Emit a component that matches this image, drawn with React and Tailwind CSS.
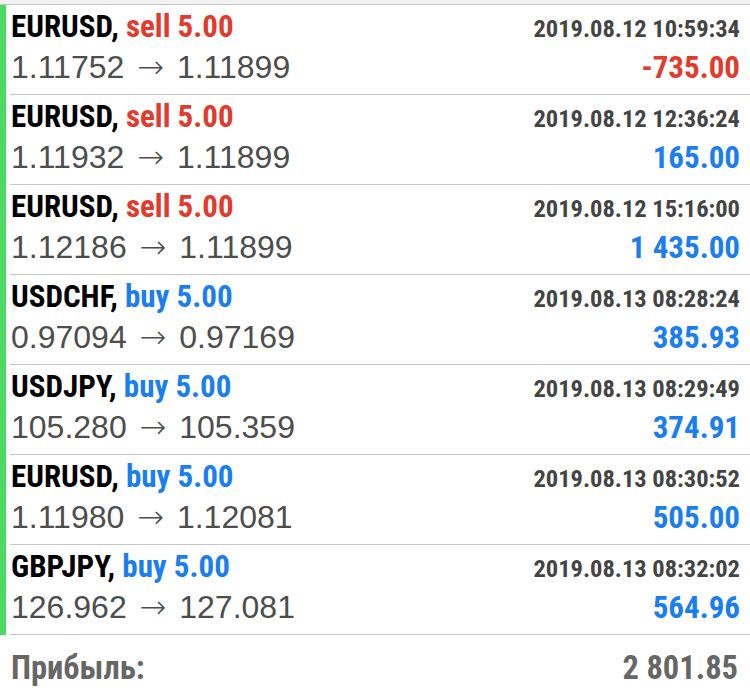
const trades = [
  { symbol: "EURUSD", side: "sell", lots: "5.00", open: "1.11752", close: "1.11899", time: "2019.08.12 10:59:34", profit: "-735.00" },
  { symbol: "EURUSD", side: "sell", lots: "5.00", open: "1.11932", close: "1.11899", time: "2019.08.12 12:36:24", profit: "165.00" },
  { symbol: "EURUSD", side: "sell", lots: "5.00", open: "1.12186", close: "1.11899", time: "2019.08.12 15:16:00", profit: "1 435.00" },
  { symbol: "USDCHF", side: "buy", lots: "5.00", open: "0.97094", close: "0.97169", time: "2019.08.13 08:28:24", profit: "385.93" },
  { symbol: "USDJPY", side: "buy", lots: "5.00", open: "105.280", close: "105.359", time: "2019.08.13 08:29:49", profit: "374.91" },
  { symbol: "EURUSD", side: "buy", lots: "5.00", open: "1.11980", close: "1.12081", time: "2019.08.13 08:30:52", profit: "505.00" },
  { symbol: "GBPJPY", side: "buy", lots: "5.00", open: "126.962", close: "127.081", time: "2019.08.13 08:32:02", profit: "564.96" },
];

const narrow = "font-['Roboto_Condensed','Liberation_Sans_Narrow','Liberation_Sans',sans-serif] font-bold";

function TradeRow({ trade }) {
  const sideColor = trade.side === "sell" ? "text-[#e23a2d]" : "text-[#1a7ef0]";
  const loss = trade.profit.startsWith("-");

  return (
    <div className="ml-[4px] h-[90px] border-b border-[#c6c6c6] pl-[1px] pr-[10px] pt-[2px]">
      <div className="flex h-[40px] items-baseline justify-between">
        <span className={`${narrow} text-[31px] leading-[40px] text-black`}>
          {trade.symbol},{" "}
          <span className={sideColor}>
            {trade.side} {trade.lots}
          </span>
        </span>
        <span className={`${narrow} text-[24.5px] leading-[40px] text-[#444]`}>{trade.time}</span>
      </div>
      <div className="flex h-[40px] items-baseline justify-between">
        <span className="font-['Liberation_Sans',sans-serif] text-[32px] leading-[40px] text-[#4d4d4d]">
          {trade.open}{" "}
          <span className="mx-[4px] font-['DejaVu_Sans',sans-serif] font-extralight">→</span>{" "}
          {trade.close}
        </span>
        <span className={`${narrow} text-[31px] leading-[40px] ${loss ? "text-[#e23a2d]" : "text-[#1a7ef0]"}`}>
          {trade.profit}
        </span>
      </div>
    </div>
  );
}

export default function App() {
  return (
    <div className="h-[691px] w-[750px] overflow-hidden bg-white">
      <div className="h-[5px] border-b border-[#c6c6c6] bg-[#f2f2f2]" />
      <div className="border-l-[6px] border-[#4cd964]">
        {trades.map((t, i) => (
          <TradeRow key={i} trade={t} />
        ))}
      </div>
      <div className="flex h-[57px] items-baseline justify-between pl-[11px] pr-[12px] pt-[13px]">
        <span className={`${narrow} text-[32.5px] leading-[40px] text-[#666]`}>Прибыль:</span>
        <span className={`${narrow} text-[32.5px] leading-[40px] text-[#666]`}>2 801.85</span>
      </div>
    </div>
  );
}
